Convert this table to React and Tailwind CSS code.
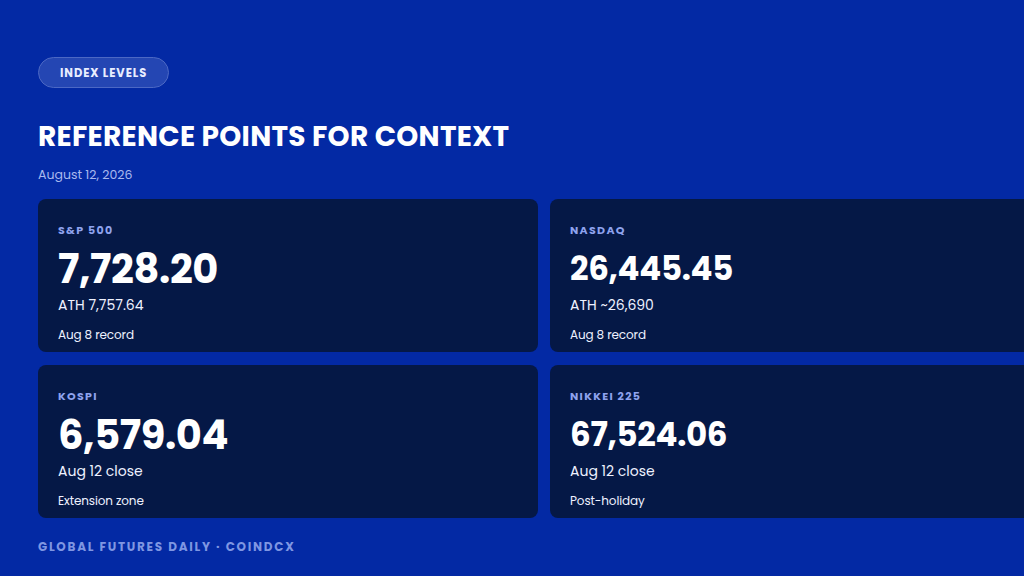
export default function App() {
  const cards = [
    { label: "S&P 500", value: "7,728.20", sub: "ATH 7,757.64", note: "Aug 8 record", big: true },
    { label: "NASDAQ", value: "26,445.45", sub: "ATH ~26,690", note: "Aug 8 record", big: false },
    { label: "KOSPI", value: "6,579.04", sub: "Aug 12 close", note: "Extension zone", big: true },
    { label: "NIKKEI 225", value: "67,524.06", sub: "Aug 12 close", note: "Post-holiday", big: false },
  ];
  return (
    <div
      className="w-[1024px] h-[576px] overflow-hidden bg-[#0329a4] text-white pl-[38px] pt-[57px]"
      style={{ fontFamily: "Poppins, Inter, 'Noto Sans', sans-serif" }}
    >
      <div className="inline-flex items-center h-[31px] pt-[3px] px-[21px] rounded-full bg-[#2446b3] border border-[#4c68c4] text-[11.5px] font-bold tracking-[0.08em] text-[#e8edff]">
        INDEX LEVELS
      </div>
      <h1 className="mt-[31px] text-[28px] leading-[36px] font-bold tracking-[0.01em] whitespace-nowrap">
        REFERENCE POINTS FOR CONTEXT
      </h1>
      <div className="mt-[12px] text-[12.5px] leading-[16px] text-[#a9b9ee]">August 12, 2026</div>
      <div className="mt-[16px] grid grid-cols-[500px_500px] gap-x-[12px] gap-y-[13px] w-[1100px]">
        {cards.map((c) => (
          <div key={c.label} className="h-[153px] rounded-[8px] bg-[#051846] pl-[20px] pt-[24px]">
            <div className="text-[11px] leading-[14px] font-bold tracking-[0.12em] text-[#8fa3ee]">{c.label}</div>
            <div
              className={
                c.big
                  ? "mt-[8px] text-[40px] leading-[48px] font-bold tracking-[-0.01em]"
                  : "mt-[8px] text-[32.5px] leading-[48px] font-bold tracking-[-0.01em]"
              }
            >
              {c.value}
            </div>
            <div className="mt-[2px] text-[14px] leading-[20px] text-[#eef1ff]">{c.sub}</div>
            <div className="mt-[12px] text-[12px] leading-[16px] tracking-[-0.01em] text-[#eef1ff]">{c.note}</div>
          </div>
        ))}
      </div>
      <div className="mt-[22px] text-[12px] leading-[14px] font-bold tracking-[0.145em] text-[#7f96e2]">
        GLOBAL FUTURES DAILY · COINDCX
      </div>
    </div>
  );
}
